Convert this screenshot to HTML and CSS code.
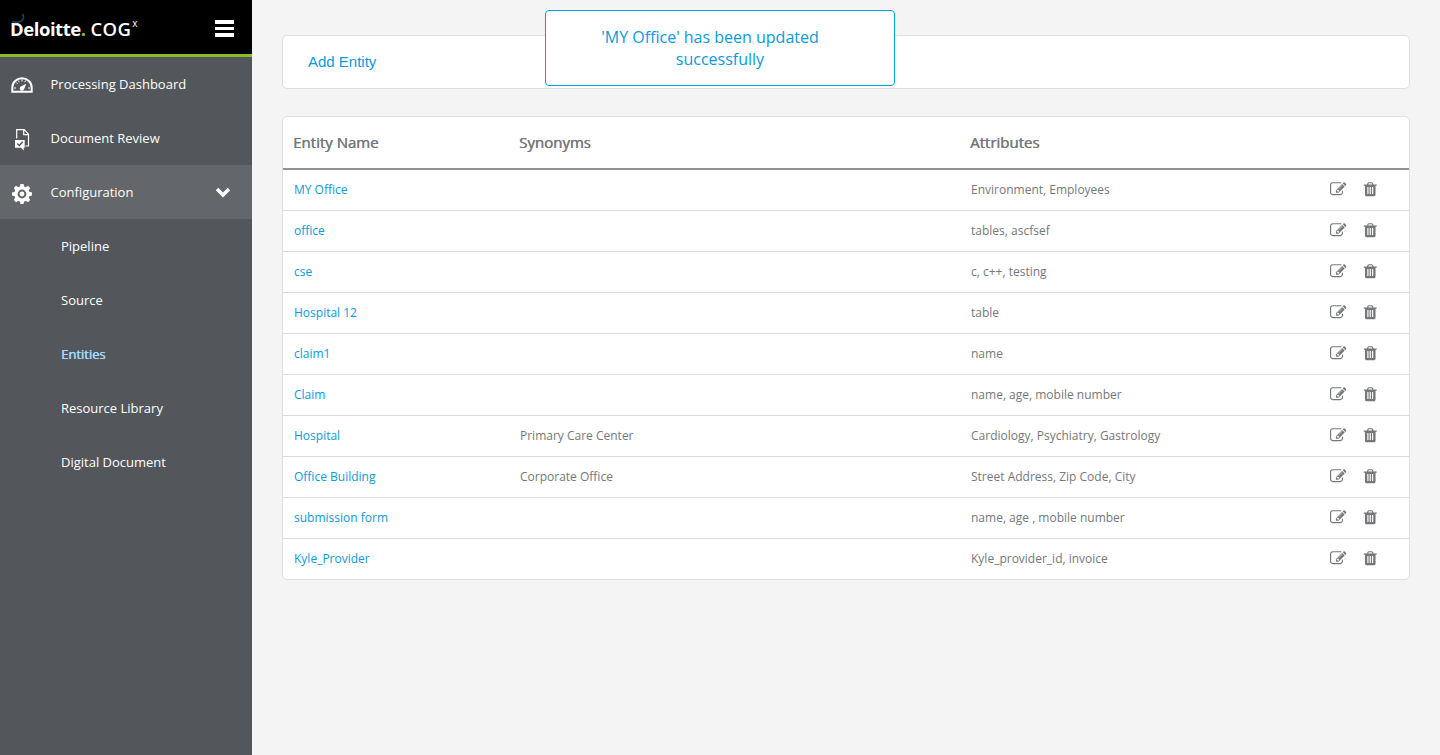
FILE: index.html
```html
<!DOCTYPE html>
<html lang="en">
<head>
<meta charset="utf-8">
<title>Entities</title>
<link rel="stylesheet" href="styles.css">
</head>
<body>
<svg class="defs" aria-hidden="true">
  <symbol id="edit" viewBox="0 0 1792 1792"><path d="M888 1184l116-116-152-152-116 116v56h96v96h56zm440-720q-16-16-33 1l-350 350q-17 17-1 33t33-1l350-350q17-17 1-33zm80 594v190q0 119-84.500 203.500t-203.500 84.500h-832q-119 0-203.500-84.500t-84.500-203.500v-832q0-119 84.500-203.500t203.500-84.500h832q63 0 117 25 15 7 18 23 3 17-9 29l-49 49q-14 14-32 8-23-6-45-6h-832q-66 0-113 47t-47 113v832q0 66 47 113t113 47h832q66 0 113-47t47-113v-126q0-13 9-22l64-64q15-15 35-7t20 29zm-96-738l288 288-672 672h-288v-288zm444 132l-92 92-288-288 92-92q28-28 68-28t68 28l152 152q28 28 28 68t-28 68z"/></symbol>
  <symbol id="trash" viewBox="0 0 1792 1792"><path d="M704 1376v-704q0-14-9-23t-23-9h-64q-14 0-23 9t-9 23v704q0 14 9 23t23 9h64q14 0 23-9t9-23zm256 0v-704q0-14-9-23t-23-9h-64q-14 0-23 9t-9 23v704q0 14 9 23t23 9h64q14 0 23-9t9-23zm256 0v-704q0-14-9-23t-23-9h-64q-14 0-23 9t-9 23v704q0 14 9 23t23 9h64q14 0 23-9t9-23zm-544-992h448l-48-117q-7-9-17-11h-317q-10 2-17 11zm928 32v64q0 14-9 23t-23 9h-96v948q0 83-47 143.500t-113 60.500h-832q-66 0-113-58.500t-47-141.500v-952h-96q-14 0-23-9t-9-23v-64q0-14 9-23t23-9h309l70-167q15-37 54-63t79-26h320q40 0 79 26t54 63l70 167h309q14 0 23 9t9 23z"/></symbol>
</svg>
<div class="app">
  <aside class="sidebar">
    <header class="brand">
      <div class="logo"><b>Deloitte</b><b class="dot">.</b><span class="cog">COG</span><sup>x</sup>
        <svg class="arc" width="14" height="12" viewBox="0 0 14 12"><path d="M11.500 1Q14 5 10.500 8Q5 10.500 1 8.500" fill="none" stroke="#0f4566" stroke-width="1.600"/></svg>
      </div>
      <div class="burger"><i></i><i></i><i></i></div>
    </header>
    <nav>
      <a class="item"><svg class="icon" viewBox="0 0 24 24"><path d="M2.300 17.700V13.500a9.700 9.200 0 0 1 19.400 0v4.200z" fill="none" stroke="#fff" stroke-width="2"/><path d="M4 14h2M18 14h2M6.300 8.500l1.400 1.400M12 5.500v2M8.500 6.600l.7 1.600M15.500 6.600l-.7 1.600" stroke="#fff" stroke-width="1"/><path d="M16.300 9.700l-2.100 5.400a2.300 2.300 0 1 1-2.800-2.800z" fill="#fff"/></svg><span>Processing Dashboard</span></a>
      <a class="item"><svg class="icon" viewBox="0 0 24 24"><path d="M6.700 10.500V1.700h7.500l4.300 4.500v11.800h-3.200M13.700 2v4.700h4.600" fill="none" stroke="#fff" stroke-width="1.200"/><path d="M5 12h9.700v7.700h-1v2.800l-2.700-2.800H5z" fill="#fff"/><path d="M7.300 15.500l2 2 3.500-3.700" fill="none" stroke="#53565a" stroke-width="1.500"/></svg><span>Document Review</span></a>
      <a class="item open"><svg class="icon" viewBox="0 0 24 24"><g fill="#fff"><circle cx="12" cy="12" r="7.700"/><path id="tooth" d="M9.700 5l.8-3h3l.8 3v14l-.8 3h-3l-.8-3z"/><use href="#tooth" transform="rotate(45 12 12)"/><use href="#tooth" transform="rotate(90 12 12)"/><use href="#tooth" transform="rotate(135 12 12)"/></g><circle cx="12" cy="12" r="3.400" fill="#fff" stroke="#63666a" stroke-width="2"/></svg><span>Configuration</span><svg class="chevron" width="16" height="12" viewBox="0 0 16 12"><path d="M2 3l6 6 6-6" fill="none" stroke="#fff" stroke-width="3.400"/></svg></a>
      <a class="sub">Pipeline</a>
      <a class="sub">Source</a>
      <a class="sub current">Entities</a>
      <a class="sub">Resource Library</a>
      <a class="sub">Digital Document</a>
    </nav>
  </aside>
  <main class="content">
    <section class="toolbar"><a>Add Entity</a></section>
    <section class="table">
      <div class="row head"><div>Entity Name</div><div>Synonyms</div><div>Attributes</div></div>
      <div class="row"><a>MY Office</a><div></div><div>Environment, Employees</div><div class="actions"><svg><use href="#edit"/></svg><svg><use href="#trash"/></svg></div></div>
      <div class="row"><a>office</a><div></div><div>tables, ascfsef</div><div class="actions"><svg><use href="#edit"/></svg><svg><use href="#trash"/></svg></div></div>
      <div class="row"><a>cse</a><div></div><div>c, c++, testing</div><div class="actions"><svg><use href="#edit"/></svg><svg><use href="#trash"/></svg></div></div>
      <div class="row"><a>Hospital 12</a><div></div><div>table</div><div class="actions"><svg><use href="#edit"/></svg><svg><use href="#trash"/></svg></div></div>
      <div class="row"><a>claim1</a><div></div><div>name</div><div class="actions"><svg><use href="#edit"/></svg><svg><use href="#trash"/></svg></div></div>
      <div class="row"><a>Claim</a><div></div><div>name, age, mobile number</div><div class="actions"><svg><use href="#edit"/></svg><svg><use href="#trash"/></svg></div></div>
      <div class="row"><a>Hospital</a><div>Primary Care Center</div><div>Cardiology, Psychiatry, Gastrology</div><div class="actions"><svg><use href="#edit"/></svg><svg><use href="#trash"/></svg></div></div>
      <div class="row"><a>Office Building</a><div>Corporate Office</div><div>Street Address, Zip Code, City</div><div class="actions"><svg><use href="#edit"/></svg><svg><use href="#trash"/></svg></div></div>
      <div class="row"><a>submission form</a><div></div><div>name, age , mobile number</div><div class="actions"><svg><use href="#edit"/></svg><svg><use href="#trash"/></svg></div></div>
      <div class="row"><a>Kyle_Provider</a><div></div><div>Kyle_provider_id, invoice</div><div class="actions"><svg><use href="#edit"/></svg><svg><use href="#trash"/></svg></div></div>
    </section>
  </main>
</div>
<div class="toast"><span>'MY Office' has been updated</span> successfully</div>
</body>
</html>
```

FILE: styles.css
```css
* { box-sizing: border-box; }
body { margin: 0; background: #f4f4f4; font-family: "Open Sans", sans-serif; color: #75787b; }
.defs { display: none; }
.app { display: flex; height: 755px; }

.sidebar { width: 252px; flex: none; background: #53565a; color: #fff; }
.brand { height: 57px; background: #000; border-bottom: 3px solid #86bc25; display: flex; justify-content: space-between; padding: 0 18px 0 10px; }
.logo { position: relative; display: flex; height: 54px; padding-top: 15px; font-size: 18.500px; line-height: 27px; letter-spacing: -0.450px; }
.logo .dot { color: #86bc25; }
.logo .cog { margin-left: 5px; font-weight: 600; letter-spacing: 0.300px; }
.logo sup { font-size: 10px; line-height: 14px; margin: 1px 0 0 1px; }
.logo .arc { position: absolute; left: 1px; top: 13px; }
.burger { display: flex; flex-direction: column; gap: 3px; padding-top: 20px; }
.burger i { width: 19px; height: 3.500px; background: #fff; }

.item { display: flex; align-items: center; height: 54px; padding: 0 21px 0 10px; font-size: 13px; }
.item .icon { width: 24px; height: 24px; margin: 4px 16.500px 0 0; }
.item.open { background: #63666a; }
.chevron { margin-left: auto; }
.sub { display: flex; align-items: center; height: 54px; padding-left: 61px; font-size: 13px; }
.current { color: #a0dcff; text-shadow: 0.500px 0 #a0dcff; }

.content { flex: 1; padding: 35px 30px 0; }
.toolbar { height: 54px; display: flex; align-items: center; padding: 0 0 2px 25px; background: #fff; border: 1px solid #dfdfdf; border-radius: 5px; font: 15px "Liberation Sans", Arial, sans-serif; color: #0a9bdc; }
.table { margin-top: 27px; background: #fff; border: 1px solid #dfdfdf; border-radius: 5px; }
.row { display: grid; grid-template-columns: 226px 451px 1fr 89px; align-items: center; height: 41px; padding-bottom: 2px; font-size: 12px; border-bottom: 1px solid #dcdcdc; }
.row > * { padding-left: 11px; }
.row > a { color: #0a9bdc; }
.row.head { height: 53px; border-bottom: 2px solid #939393; font-size: 15px; text-shadow: 0.500px 0 #75787b; }
.row.head > * { padding-left: 10px; }
.row:last-child { border-bottom-color: transparent; margin-bottom: -1px; }
.row .actions { display: flex; gap: 15px; padding-left: 10px; }
.actions svg { width: 16.500px; height: 16.500px; fill: #75787b; }

.toast { position: absolute; left: 545px; top: 10px; width: 350px; height: 76px; padding: 15px 48px; text-align: center; background: #fff; border: 1px solid #00a3e0; border-radius: 4px; color: #0a9bdc; font-size: 16px; line-height: 22px; }
.toast span { padding-right: 20px; }
```
